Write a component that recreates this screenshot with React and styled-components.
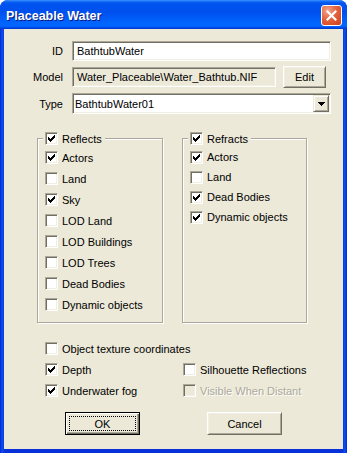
import React from "react";
import styled, { createGlobalStyle } from "styled-components";

const GlobalStyle = createGlobalStyle`
  html, body { margin: 0; padding: 0; background: #ffffff; }
  body { font-family: "Liberation Sans", Arial, sans-serif; font-size: 11px; color: #000; }
  #root { width: 347px; height: 453px; }
`;

const Window = styled.div`
  width: 347px;
  height: 453px;
  box-sizing: border-box;
  display: flex;
  flex-direction: column;
  border-radius: 8px 8px 0 0;
  overflow: hidden;
  background: linear-gradient(90deg, #0019cf 0px, #0843e6 1px, #0a4ff0 3px, #0831d9 4px, #0831d9 calc(100% - 4px), #0a4ff0 calc(100% - 3px), #0843e6 calc(100% - 1px), #0019cf 100%);
`;

const TitleBar = styled.div`
  height: 29px;
  flex: none;
  box-sizing: border-box;
  display: flex;
  align-items: center;
  justify-content: space-between;
  padding: 2px 5px 0 6px;
  background: linear-gradient(180deg, #3d95ff 0px, #0a5ff2 2px, #0053ee 4px, #0050ee 12px, #0066ff 24px, #0066ff 26px, #005bff 27px, #003dd7 28px, #003dd7 29px);
`;

const Title = styled.span`
  font-family: "Liberation Sans", Arial, sans-serif;
  font-weight: bold;
  font-size: 12.5px;
  color: #ffffff;
  text-shadow: 1px 1px 0 #0a1883;
`;

const CloseButton = styled.div`
  width: 21px;
  height: 21px;
  box-sizing: border-box;
  border: 1px solid #ffffff;
  border-radius: 3px;
  background: radial-gradient(circle at 30% 25%, #f2a58c 0%, #e3643f 45%, #cf3e1a 100%);
  display: flex;
  align-items: center;
  justify-content: center;
`;

const Client = styled.div`
  flex: 1;
  margin: 0 4px 4px;
  background: #ece9d8;
  padding: 12px 12px 0 0;
  display: flex;
  flex-direction: column;
`;

const FormGrid = styled.div`
  display: grid;
  grid-template-columns: 59px 1fr;
  column-gap: 9px;
  row-gap: 5px;
  align-items: center;
`;

const Label = styled.span`
  text-align: right;
  white-space: nowrap;
`;

const Field = styled.div`
  height: ${(p) => p.$h || 20}px;
  box-sizing: border-box;
  border: 1px solid;
  border-color: #aca899 #ffffff #ffffff #aca899;
  box-shadow: inset 1px 1px 0 #716f64, inset -1px -1px 0 #f1efe2;
  background: ${(p) => (p.$readOnly ? "#ece9d8" : "#ffffff")};
  padding: ${(p) => p.$pad || "0 4px"};
  display: flex;
  align-items: center;
  white-space: nowrap;
  overflow: hidden;
  width: ${(p) => (p.$w ? `${p.$w}px` : "auto")};
  flex: ${(p) => (p.$w ? "none" : "1")};
`;

const FieldText = styled.span`
  flex: 1;
`;

const InlineRow = styled.div`
  display: flex;
  align-items: center;
  gap: 7px;
`;

const Button = styled.div`
  width: ${(p) => p.$w}px;
  height: ${(p) => p.$h}px;
  box-sizing: border-box;
  background: #ece9d8;
  border: 1px solid;
  border-color: ${(p) => (p.$default ? "#000000" : "#ffffff #716f64 #716f64 #ffffff")};
  box-shadow: ${(p) =>
    p.$default
      ? "inset 1px 1px 0 #ffffff, inset -1px -1px 0 #716f64, inset -2px -2px 0 #aca899"
      : "inset 1px 1px 0 #f1efe2, inset -1px -1px 0 #aca899"};
  display: flex;
  align-items: center;
  justify-content: center;
  padding: ${(p) => (p.$default ? "3px" : "0")};
  flex: none;
`;

const FocusRect = styled.div`
  flex: 1;
  align-self: stretch;
  border: 1px dotted #000;
  display: flex;
  align-items: center;
  justify-content: center;
`;

const ArrowButton = styled.div`
  width: 16px;
  align-self: stretch;
  box-sizing: border-box;
  background: #ece9d8;
  border: 1px solid;
  border-color: #ece9d8 #716f64 #716f64 #ece9d8;
  box-shadow: inset 1px 1px 0 #ffffff, inset -1px -1px 0 #aca899;
  display: flex;
  align-items: center;
  justify-content: center;
  flex: none;
`;

const Groups = styled.div`
  display: flex;
  align-items: stretch;
  gap: 19px;
  margin-top: 18px;
  padding-left: 33px;
`;

const GroupBox = styled.fieldset`
  width: ${(p) => p.$w}px;
  box-sizing: border-box;
  margin: 0;
  padding: 0 0 7px 7px;
  border: 1px solid #aca899;
  box-shadow: inset 1px 1px 0 #ffffff, 1px 1px 0 #ffffff;
  min-width: 0;
`;

const Legend = styled.legend`
  margin-left: -2px;
  padding: 0 3px 0 2px;
  background: #ece9d8;
  display: flex;
  align-items: center;
  gap: 4px;
  height: 13px;
`;

const List = styled.div`
  display: flex;
  flex-direction: column;
  padding-top: 2px;
`;

const OptionRow = styled.div`
  display: flex;
  align-items: center;
  gap: 4px;
  height: ${(p) => p.$h}px;
  white-space: nowrap;
  color: ${(p) => (p.$disabled ? "#aca899" : "#000000")};
  text-shadow: ${(p) => (p.$disabled ? "1px 1px 0 #ffffff" : "none")};
`;

const Box = styled.span`
  width: 13px;
  height: 13px;
  box-sizing: border-box;
  flex: none;
  border: 1px solid;
  border-color: #aca899 #ffffff #ffffff #aca899;
  box-shadow: inset 1px 1px 0 #716f64, inset -1px -1px 0 #f1efe2;
  background: ${(p) => (p.$disabled ? "#ece9d8" : "#ffffff")};
  display: flex;
  align-items: center;
  justify-content: center;
`;

const Options = styled.div`
  display: grid;
  grid-template-columns: 138px 1fr;
  grid-auto-rows: 21px;
  margin-top: 15px;
  padding-left: 41px;
`;

const Wide = styled.div`
  grid-column: 1 / span 2;
`;

const ButtonRow = styled.div`
  display: flex;
  gap: 67px;
  margin-top: 11px;
  padding-left: 61px;
`;

const CheckMark = () => (
  <svg width="7" height="7" viewBox="0 0 7 7" shapeRendering="crispEdges">
    <path
      fill="#000"
      d="M6 0h1v1h-1z M5 1h2v1h-2z M0 2h1v1h-1z M4 2h3v1h-3z M0 3h2v1h-2z M3 3h3v1h-3z M0 4h5v1h-5z M1 5h3v1h-3z M2 6h1v1h-1z"
    />
  </svg>
);

const Check = ({ checked, disabled, label, h = 21 }) => (
  <OptionRow $h={h} $disabled={disabled}>
    <Box $disabled={disabled}>{checked && <CheckMark />}</Box>
    <span>{label}</span>
  </OptionRow>
);

const reflects = [
  ["Actors", true],
  ["Land", false],
  ["Sky", true],
  ["LOD Land", false],
  ["LOD Buildings", false],
  ["LOD Trees", false],
  ["Dead Bodies", false],
  ["Dynamic objects", false],
];

const refracts = [
  ["Actors", true],
  ["Land", false],
  ["Dead Bodies", true],
  ["Dynamic objects", true],
];

export default function App() {
  return (
    <>
      <GlobalStyle />
      <Window>
        <TitleBar>
          <Title>Placeable Water</Title>
          <CloseButton>
            <svg width="11" height="11" viewBox="0 0 11 11">
              <path d="M1.5 1.5 L9.5 9.5 M9.5 1.5 L1.5 9.5" stroke="#fff" strokeWidth="2.2" strokeLinecap="square" />
            </svg>
          </CloseButton>
        </TitleBar>
        <Client>
          <FormGrid>
            <Label>ID</Label>
            <Field>BathtubWater</Field>
            <Label>Model</Label>
            <InlineRow>
              <Field $readOnly $w={204}>Water_Placeable\Water_Bathtub.NIF</Field>
              <Button $w={43} $h={22}>Edit</Button>
            </InlineRow>
            <Label>Type</Label>
            <Field $h={21} $pad="1px 1px 1px 2px">
              <FieldText>BathtubWater01</FieldText>
              <ArrowButton>
                <svg width="7" height="4" viewBox="0 0 7 4" shapeRendering="crispEdges">
                  <path d="M0 0h7v1h-7z M1 1h5v1h-5z M2 2h3v1h-3z M3 3h1v1h-1z" fill="#000" />
                </svg>
              </ArrowButton>
            </Field>
          </FormGrid>

          <Groups>
            <GroupBox $w={126}>
              <Legend>
                <Box><CheckMark /></Box>
                <span>Reflects</span>
              </Legend>
              <List>
                {reflects.map(([l, c]) => (
                  <Check key={l} label={l} checked={c} h={21} />
                ))}
              </List>
            </GroupBox>
            <GroupBox $w={125}>
              <Legend>
                <Box><CheckMark /></Box>
                <span>Refracts</span>
              </Legend>
              <List>
                {refracts.map(([l, c]) => (
                  <Check key={l} label={l} checked={c} h={20} />
                ))}
              </List>
            </GroupBox>
          </Groups>

          <Options>
            <Wide>
              <Check label="Object texture coordinates" />
            </Wide>
            <Check label="Depth" checked />
            <Check label="Silhouette Reflections" />
            <Check label="Underwater fog" checked />
            <Check label="Visible When Distant" disabled />
          </Options>

          <ButtonRow>
            <Button $w={75} $h={23} $default>
              <FocusRect>OK</FocusRect>
            </Button>
            <Button $w={75} $h={23}>Cancel</Button>
          </ButtonRow>
        </Client>
      </Window>
    </>
  );
}
